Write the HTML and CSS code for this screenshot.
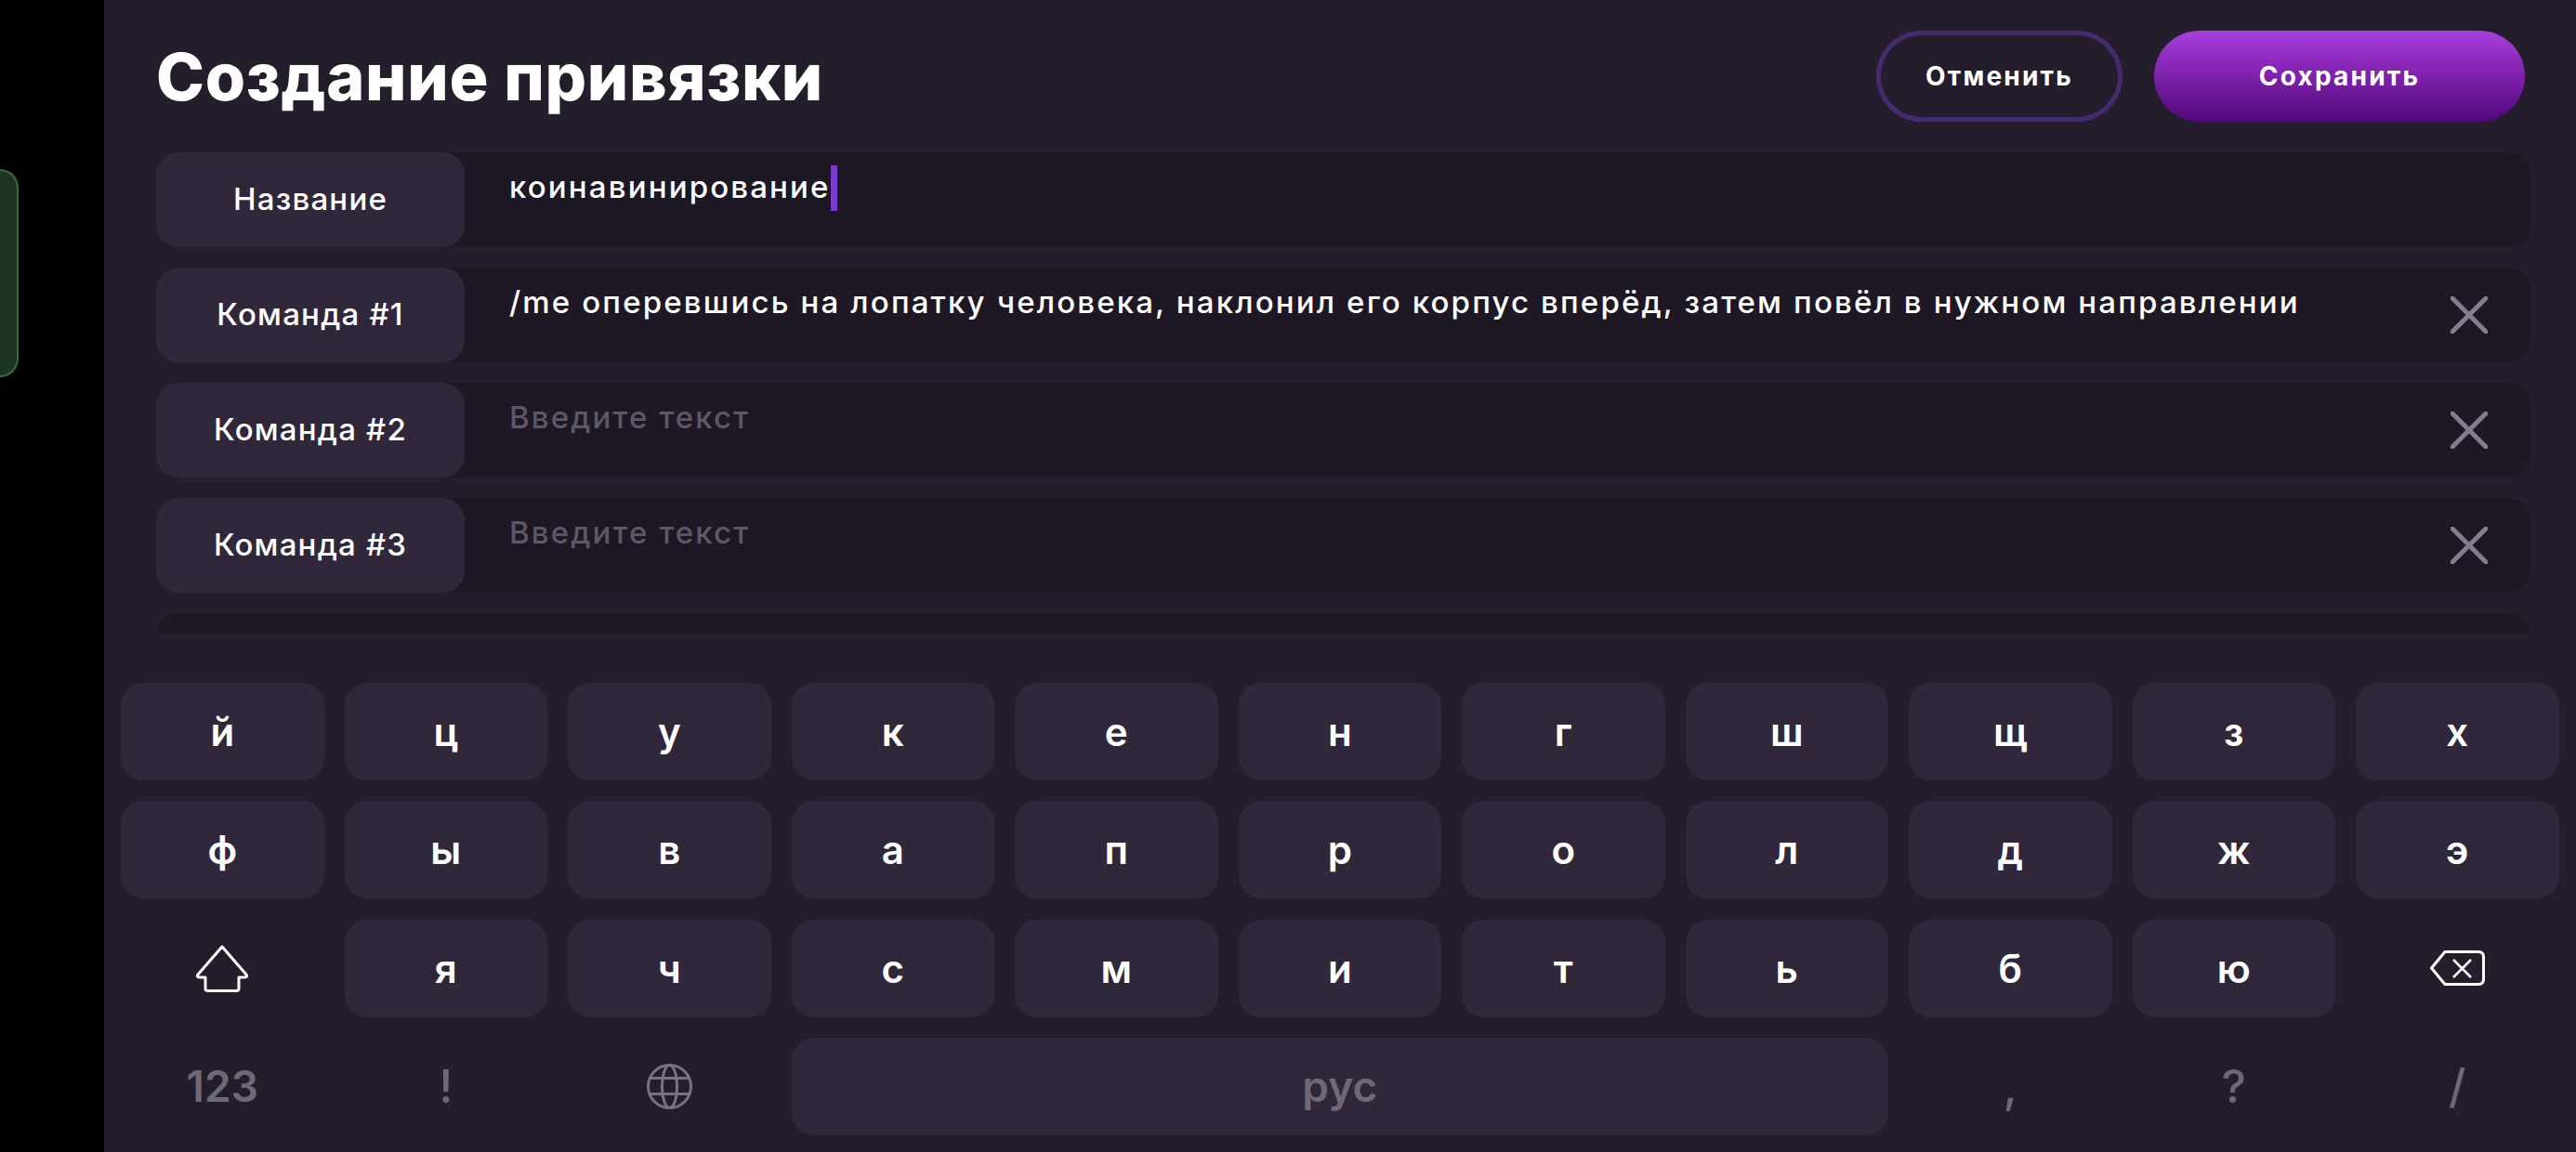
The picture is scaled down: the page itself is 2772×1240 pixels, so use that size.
FILE: index.html
```html
<!DOCTYPE html>
<html lang="ru">
<head>
    <meta charset="UTF-8">
    <title>Создание привязки</title>
    <link rel="stylesheet" href="styles.css">
</head>
<body>
    <div class="app">
        <div class="rail">
            <div class="rail-tab"></div>
        </div>

        <div class="panel">
            <header class="header">
                <h1>Создание привязки</h1>
                <div class="actions">
                    <button class="btn btn-cancel">Отменить</button>
                    <button class="btn btn-save">Сохранить</button>
                </div>
            </header>

            <div class="form">
                <div class="row">
                    <div class="row-label">Название</div>
                    <div class="row-text">коинавинирование<span class="caret"></span></div>
                </div>
                <div class="row">
                    <div class="row-label">Команда #1</div>
                    <div class="row-text">/me оперевшись на лопатку человека, наклонил его корпус вперёд, затем повёл в нужном направлении</div>
                    <svg class="row-clear" viewBox="0 0 40 40"><path d="M2 2 38 38M38 2 2 38"/></svg>
                </div>
                <div class="row">
                    <div class="row-label">Команда #2</div>
                    <div class="row-text placeholder">Введите текст</div>
                    <svg class="row-clear" viewBox="0 0 40 40"><path d="M2 2 38 38M38 2 2 38"/></svg>
                </div>
                <div class="row">
                    <div class="row-label">Команда #3</div>
                    <div class="row-text placeholder">Введите текст</div>
                    <svg class="row-clear" viewBox="0 0 40 40"><path d="M2 2 38 38M38 2 2 38"/></svg>
                </div>
                <div class="row"></div>
            </div>

            <div class="keyboard">
                <div class="key">й</div>
                <div class="key">ц</div>
                <div class="key">у</div>
                <div class="key">к</div>
                <div class="key">е</div>
                <div class="key">н</div>
                <div class="key">г</div>
                <div class="key">ш</div>
                <div class="key">щ</div>
                <div class="key">з</div>
                <div class="key">х</div>

                <div class="key">ф</div>
                <div class="key">ы</div>
                <div class="key">в</div>
                <div class="key">а</div>
                <div class="key">п</div>
                <div class="key">р</div>
                <div class="key">о</div>
                <div class="key">л</div>
                <div class="key">д</div>
                <div class="key">ж</div>
                <div class="key">э</div>

                <div class="key key-flat">
                    <svg class="icon-shift" viewBox="0 0 56 51"><path d="M28 2 54 32Q56 35 52 35H46V47Q46 49.500 43 49.500H13Q10 49.500 10 47V35H4Q0 35 2 32Z"/></svg>
                </div>
                <div class="key">я</div>
                <div class="key">ч</div>
                <div class="key">с</div>
                <div class="key">м</div>
                <div class="key">и</div>
                <div class="key">т</div>
                <div class="key">ь</div>
                <div class="key">б</div>
                <div class="key">ю</div>
                <div class="key key-flat">
                    <svg class="icon-back" viewBox="0 0 59 38"><path class="back-outline" d="M16 1.500H52Q57.500 1.500 57.500 7V31Q57.500 36.500 52 36.500H16L1.500 19Z"/><path d="M25 10 44 29M44 10 25 29"/></svg>
                </div>

                <div class="key key-flat key-dim key-num">123</div>
                <div class="key key-flat key-dim key-punct">!</div>
                <div class="key key-flat">
                    <svg class="icon-globe" viewBox="0 0 49 49"><circle cx="24.500" cy="24.500" r="23"/><ellipse cx="24.500" cy="24.500" rx="8" ry="23"/><path d="M3 15.500H46M3 32.500H46"/></svg>
                </div>
                <div class="key key-space key-dim">рус</div>
                <div class="key key-flat key-dim key-punct">,</div>
                <div class="key key-flat key-dim key-punct">?</div>
                <div class="key key-flat key-dim key-punct">/</div>
            </div>
        </div>
    </div>
</body>
</html>
```

FILE: styles.css
```css
html, body { margin: 0; height: 100%; background: #000; overflow: hidden; }
body { font-family: "Inter", "Noto Sans", sans-serif; color: #fff; }

.app { display: flex; height: 1240px; }

.rail { width: 112px; flex: none; background: #000; padding-top: 182px; box-sizing: border-box; }
.rail-tab { width: 20px; height: 224px; box-sizing: border-box; background: #1e3525; border: 2px solid #2f6f3c; border-left: 0; border-radius: 0 20px 20px 0; }

.panel { flex: 1; background: #241d2c; display: flex; flex-direction: column; }

.header { height: 164px; flex: none; display: flex; align-items: center; justify-content: space-between; padding: 0 55px 0 56px; }
.header h1 { margin: 0; font-size: 70px; font-weight: 800; letter-spacing: 0.7px; }
.actions { display: flex; gap: 34px; }

.btn { height: 98px; border-radius: 49px; border: 0; color: #fff; font-family: inherit; font-size: 28px; font-weight: 700; letter-spacing: 2.200px; box-sizing: border-box; }
.btn-cancel { width: 265px; background: transparent; border: 5px solid #462a70; }
.btn-save { width: 399px; background: linear-gradient(#a93fde, #8323b0 45%, #500878); }

.form { height: 517px; flex: none; overflow: hidden; display: flex; flex-direction: column; gap: 22px; padding: 0 49px 0 56px; }

.row { height: 102px; flex: none; display: flex; background: #1e1825; border-radius: 24px; }
.row-label { width: 332px; flex: none; background: #31273a; border-radius: 24px; display: flex; align-items: center; justify-content: center; box-sizing: border-box; padding-bottom: 2px; font-size: 33px; font-weight: 500; letter-spacing: 1.200px; }
.row-text { flex: 1; padding: 13px 0 0 48px; font-size: 33px; line-height: 48px; font-weight: 500; letter-spacing: 2.150px; white-space: nowrap; }
.row-text.placeholder { color: #5e5765; }
.caret { display: inline-block; width: 7px; height: 49px; background: #7b3bd0; vertical-align: top; margin-top: 1px; }
.row-clear { width: 40px; height: 40px; flex: none; align-self: center; margin-right: 46px; fill: none; stroke: #857c8e; stroke-width: 5; stroke-linecap: round; }

.keyboard { flex: 1; display: grid; grid-template-columns: repeat(11, 218.500px); grid-auto-rows: 105px; column-gap: 22px; row-gap: 22.300px; padding: 54px 0 0 18px; }

.key { background: #31273a; border-radius: 24px; display: flex; align-items: center; justify-content: center; font-size: 42px; font-weight: 600; }
.key-flat { background: none; }
.key-dim { color: #6f6876; }
.key-num { font-size: 46px; font-weight: 600; }
.key-punct { font-size: 50px; font-weight: 500; }
.key-space { grid-column: span 5; font-size: 46px; }

.icon-shift { width: 56px; height: 51px; fill: none; stroke: #fff; stroke-width: 3; stroke-linejoin: round; }
.icon-back { width: 59px; height: 38px; fill: none; stroke: #fff; stroke-width: 2.500; stroke-linejoin: round; }
.back-outline { stroke-width: 3; }
.icon-globe { width: 49px; height: 49px; fill: none; stroke: #7a737f; stroke-width: 3; }
```
